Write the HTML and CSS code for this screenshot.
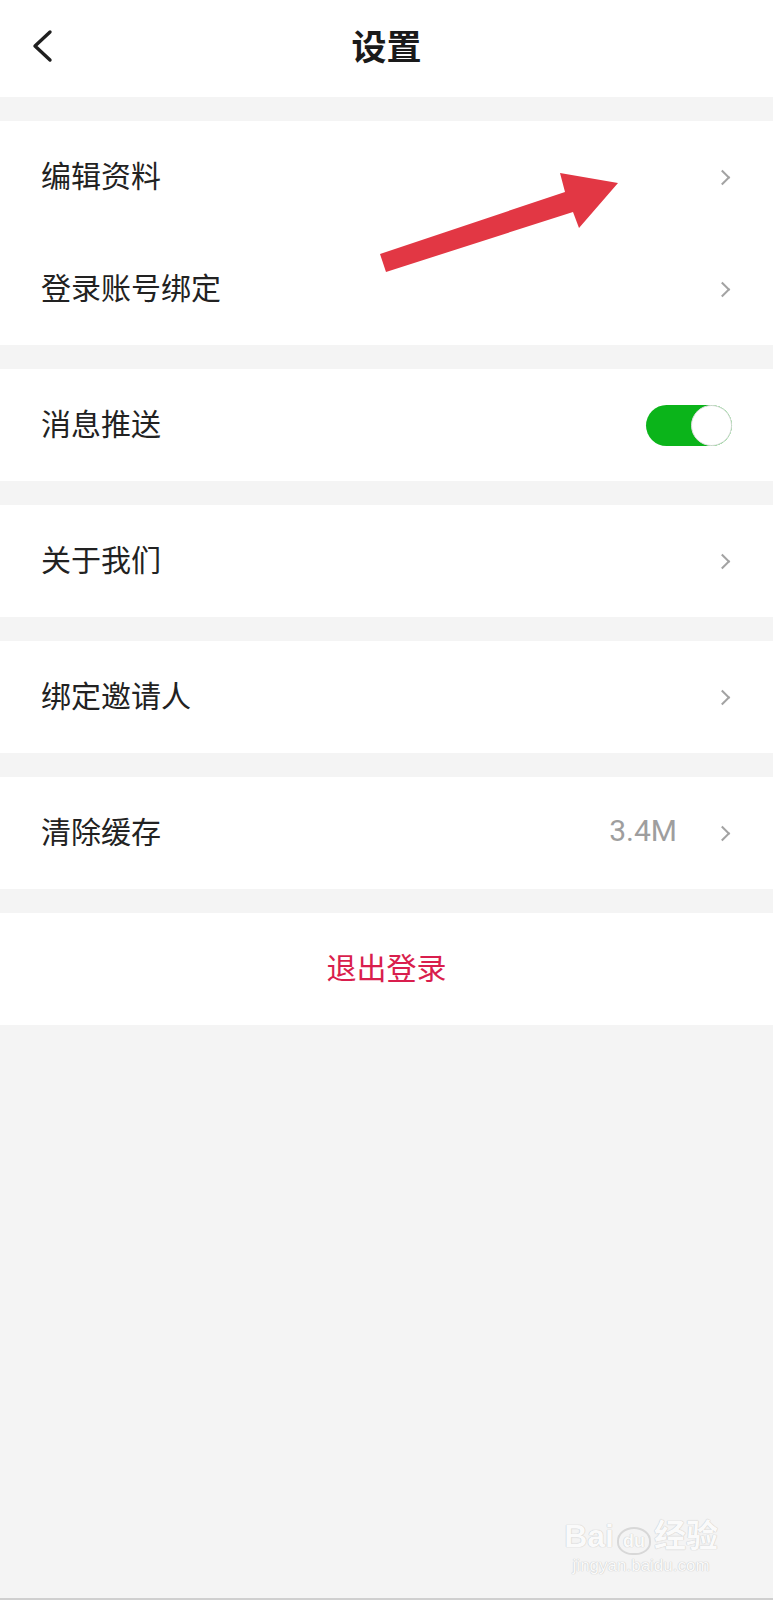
FILE: index.html
```html
<!DOCTYPE html>
<html lang="zh">
<head>
    <meta charset="UTF-8">
    <meta name="viewport" content="width=device-width, initial-scale=1.0">
    <title>设置</title>
    <link rel="stylesheet" href="styles.css">
</head>
<body>
    <div class="page">
        <div class="header">
            <span class="back">
                <svg width="22" height="34" viewBox="0 0 22 34">
                    <polyline points="18,3 3,17 18,31" fill="none" stroke="#1f1f1f" stroke-width="3.4" stroke-linecap="round" stroke-linejoin="round"/>
                </svg>
            </span>
            <h1>设置</h1>
        </div>

        <div class="group">
            <div class="row">
                <span class="label">编辑资料</span>
                <span class="arrow"></span>
            </div>
            <div class="row">
                <span class="label">登录账号绑定</span>
                <span class="arrow"></span>
            </div>
        </div>

        <div class="group">
            <div class="row">
                <span class="label">消息推送</span>
                <span class="switch on"><span class="knob"></span></span>
            </div>
        </div>

        <div class="group">
            <div class="row">
                <span class="label">关于我们</span>
                <span class="arrow"></span>
            </div>
        </div>

        <div class="group">
            <div class="row">
                <span class="label">绑定邀请人</span>
                <span class="arrow"></span>
            </div>
        </div>

        <div class="group">
            <div class="row">
                <span class="label">清除缓存</span>
                <span class="value">3.4M</span>
                <span class="arrow"></span>
            </div>
        </div>

        <div class="group">
            <div class="row logout">退出登录</div>
        </div>

        <!-- 标注箭头 -->
        <svg class="mark" width="773" height="300" viewBox="0 0 773 300">
            <polygon points="380,254 565,192 560,173 618,183 579,228 573,212 386,272" fill="#e23744"/>
        </svg>

        <div class="watermark">
            <div class="wm-logo">Bai<span class="wm-du">du</span>经验</div>
            <div class="wm-url">jingyan.baidu.com</div>
        </div>
    </div>
</body>
</html>
```

FILE: styles.css
```css
body {
    margin: 0;
    background: #f4f4f4;
    font-family: "Noto Sans CJK SC", "Noto Sans", sans-serif;
    color: #222;
}

.page {
    position: relative;
    width: 773px;
    height: 1598px;
    border-bottom: 2px solid #cfcfcf;
    overflow: hidden;
}

.header {
    height: 97px;
    box-sizing: border-box;
    padding-bottom: 8px;
    background: white;
    display: flex;
    align-items: center;
    justify-content: center;
    position: relative;
}

.header h1 {
    margin: 0;
    font-size: 35px;
    font-weight: bold;
    color: #1a1a1a;
    line-height: 1;
}

.back {
    position: absolute;
    left: 32px;
    top: 29px;
    display: flex;
}

.group {
    margin-top: 24px;
    background: white;
}

.row {
    height: 112px;
    box-sizing: border-box;
    display: flex;
    align-items: center;
    padding: 0 41px 6px 41px;
}

.label {
    flex: 1;
    font-size: 30px;
    line-height: 1;
    color: #222;
}

.value {
    font-family: Roboto, "Noto Sans", sans-serif;
    font-size: 30px;
    color: #9e9e9e;
    margin-right: 40px;
}

.arrow {
    width: 9px;
    height: 9px;
    border-top: 2.5px solid #a3a3a3;
    border-right: 2.5px solid #a3a3a3;
    transform: rotate(45deg);
    margin-right: 4px;
    margin-top: 6px;
}

.switch {
    width: 86px;
    height: 41px;
    border-radius: 21px;
    background: #0bb41a;
    position: relative;
    margin-top: 6px;
}

.switch .knob {
    position: absolute;
    right: 0;
    top: 0;
    width: 39px;
    height: 39px;
    border-radius: 50%;
    background: white;
    border: 1px solid #dcdcdc;
}

.logout {
    justify-content: center;
    font-size: 30px;
    color: #d91e4d;
}

.mark {
    position: absolute;
    left: 0;
    top: 0;
    pointer-events: none;
}

.watermark {
    position: absolute;
    right: 55px;
    bottom: 22px;
    text-align: center;
    color: #fafafa;
    text-shadow: 0 0 1px #c8c8c8, 0 0 1px #c8c8c8;
}

.wm-logo {
    font-family: "Liberation Sans", "Noto Sans CJK SC", sans-serif;
    font-size: 32px;
    font-weight: bold;
    line-height: 1;
}

.wm-du {
    font-size: 18px;
    border: 2px solid #d8d8d8;
    border-radius: 50% 50% 45% 45%;
    padding: 2px 4px;
    margin: 0 3px;
}

.wm-url {
    font-family: "Liberation Sans", sans-serif;
    font-size: 17px;
    margin-top: 4px;
}
```
